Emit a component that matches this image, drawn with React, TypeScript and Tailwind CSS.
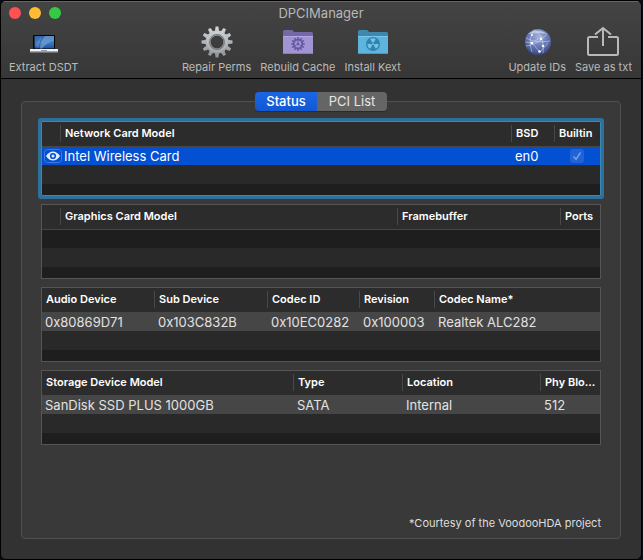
import { useState, type ReactNode } from "react";

function LaptopIcon() {
  return (
    <svg viewBox="0 0 32 32" className="size-8" aria-hidden="true">
      <defs>
        <linearGradient id="screen" x1="0" y1="0" x2="0" y2="1">
          <stop offset="0" stopColor="#3565a8" />
          <stop offset="0.55" stopColor="#3f78bd" />
          <stop offset="1" stopColor="#1f4f9f" />
        </linearGradient>
      </defs>
      <rect x="5" y="9" width="22" height="14.5" rx="1" fill="#050505" />
      <rect x="6.500" y="10" width="19.500" height="12.500" fill="url(#screen)" />
      <path d="M17 10h9v5c-5 1-9 4-12 7.500h-2c0-5 2-9 5-12.500z" fill="#7fb0dd" opacity="0.55" />
      <path d="M7 20c2-5 4-7 7-9-2 4-3 7-3 11z" fill="#6fa3d8" opacity="0.4" />
      <rect x="2" y="23" width="28" height="2" fill="#f1f1f1" />
      <rect x="2" y="25" width="28" height="1.500" fill="#a4a4a4" />
      <rect x="13" y="24" width="6" height="1" fill="#999999" />
    </svg>
  );
}

const TEETH = [0, 30, 60, 90, 120, 150, 180, 210, 240, 270, 300, 330];

function GearIcon() {
  return (
    <svg viewBox="0 0 32 32" className="size-8" aria-hidden="true">
      <defs>
        <linearGradient id="steel" gradientUnits="userSpaceOnUse" x1="0" y1="0" x2="0" y2="32">
          <stop offset="0" stopColor="#d3d8dc" />
          <stop offset="1" stopColor="#8d9093" />
        </linearGradient>
      </defs>
      <mask id="gearMask">
        {TEETH.map((a) => (
          <path key={a} d="M13.800 6 14.600 0.500h2.800l0.800 5.500z" fill="#fff" transform={`rotate(${a} 16 16)`} />
        ))}
        <circle cx="16" cy="16" r="11.500" fill="#fff" />
        <circle cx="16" cy="16" r="6.500" fill="#000" />
      </mask>
      <rect width="32" height="32" fill="url(#steel)" mask="url(#gearMask)" />
      <circle cx="16" cy="16" r="7.300" fill="none" stroke="#74797d" strokeWidth="1.200" />
      <circle cx="16" cy="16" r="9.500" fill="none" stroke="#e0e3e5" strokeWidth="0.800" opacity="0.4" />
    </svg>
  );
}

function CacheFolderIcon() {
  return (
    <svg viewBox="0 0 32 32" className="size-8" aria-hidden="true">
      <path d="M1 27V5.500q0-1.500 1.500-1.500h7q1.200 0 1.800 1l0.700 1h17.500q1.500 0 1.500 1.500V27z" fill="#7468a8" />
      <path d="M1 10h30v17q0 1-1 1H2q-1 0-1-1z" fill="#a294d4" />
      <path d="M1 10h30v1H1z" fill="#b3a7df" />
      <path d="M1 27h30q0 1-1 1H2q-1 0-1-1z" fill="#887bb9" />
      {TEETH.map((a) => (
        <path key={a} d="M15 13.500 15.400 11h1.200l0.400 2.500z" fill="#6657a3" transform={`rotate(${a} 16 18)`} />
      ))}
      <circle cx="16" cy="18" r="4.300" fill="none" stroke="#6657a3" strokeWidth="1.800" />
      <circle cx="16" cy="18" r="1.200" fill="#6657a3" />
      <path d="M16 18v-4M16 18l3.500 2M16 18l-3.500 2" stroke="#6657a3" strokeWidth="0.800" />
    </svg>
  );
}

function KextFolderIcon() {
  return (
    <svg viewBox="0 0 32 32" className="size-8" aria-hidden="true">
      <path d="M1 27V5.500q0-1.500 1.500-1.500h7q1.200 0 1.800 1l0.700 1h17.500q1.500 0 1.500 1.500V27z" fill="#3f88ac" />
      <path d="M1 10h30v17q0 1-1 1H2q-1 0-1-1z" fill="#5db5dd" />
      <path d="M1 10h30v1H1z" fill="#78c7ea" />
      <path d="M1 27h30q0 1-1 1H2q-1 0-1-1z" fill="#4998bd" />
      <circle cx="16" cy="18" r="7" fill="#2f83ae" />
      {[0, 120, 240].map((a) => (
        <path key={a} d="M15.200 16.600 13.200 13.100a5.600 5.600 0 0 1 5.600 0L16.800 16.600a1.600 1.600 0 0 0-1.600 0z" fill="#74c4e6" transform={`rotate(${a} 16 18)`} />
      ))}
      <circle cx="16" cy="18" r="1" fill="#74c4e6" />
    </svg>
  );
}

function GlobeIcon() {
  return (
    <svg viewBox="0 0 32 32" className="size-8" aria-hidden="true">
      <defs>
        <radialGradient id="globe" cx="0.5" cy="0.3" r="0.7">
          <stop offset="0" stopColor="#a3b1dc" />
          <stop offset="0.6" stopColor="#5f72b0" />
          <stop offset="1" stopColor="#39477f" />
        </radialGradient>
      </defs>
      <circle cx="17" cy="16" r="13" fill="url(#globe)" />
      <path d="M7 8c7-5 14-4 19 0-5-1-13-1-19 0z" fill="#dfe5f7" opacity="0.6" />
      <g fill="none" stroke="#d9e2fa" strokeWidth="0.700" opacity="0.75">
        <path d="M5 12c5 3 14 5 24 3M13 4c-4 6-5 13-2 22M13 4c7 4 10 11 9 23M5 20c8-1 15-5 21-12M11 17l8 9M11 17l11-7M19 26l8-9M4.500 16l6.500 1" />
      </g>
      <g fill="#ffffff">
        <circle cx="11" cy="17" r="1.300" />
        <circle cx="20" cy="13" r="1.200" />
        <circle cx="22" cy="20" r="1.200" />
        <circle cx="18.500" cy="25.500" r="1.300" />
        <circle cx="11" cy="9" r="1" />
      </g>
    </svg>
  );
}

function ShareIcon() {
  return (
    <svg viewBox="0 0 32 32" className="size-8" aria-hidden="true">
      <g fill="none" stroke="#b9b9b9" strokeWidth="2">
        <path d="M11 11H2.500Q1 11 1 12.500V27.500Q1 29 2.500 29H29.500Q31 29 31 27.500V12.500Q31 11 29.500 11H21" />
        <path d="M16 20V2M8 8.500 16 2l8 6.500" />
      </g>
    </svg>
  );
}

function ToolbarButton({ label, children }: { label: string; children: ReactNode }) {
  return (
    <button type="button" className="flex flex-col items-center text-[11px] leading-[18px] text-[#b9b9b9]">
      {children}
      {label}
    </button>
  );
}

function EyeIcon() {
  return (
    <svg viewBox="0 0 18 14" className="h-3.5 w-[18px]" role="img" aria-label="Visible">
      <rect x="0.500" y="0.500" width="17" height="13" rx="3" fill="none" stroke="#3f7ae2" />
      <path d="M2 7Q5 2.500 9 2.500T16 7Q13 11.500 9 11.500T2 7z" fill="#e3edff" />
      <circle cx="9" cy="7" r="3.100" fill="#0350d2" />
      <circle cx="9" cy="7" r="1.500" fill="#e3edff" />
    </svg>
  );
}

type Column = { title: string; width: string };

function DeviceTable({ name, columns, row, selected = false }: {
  name: string;
  columns: Column[];
  row?: ReactNode[];
  selected?: boolean;
}) {
  const rowColor = selected ? "bg-[#0350d2] text-white" : row ? "bg-[#464646] text-[#e2e2e2]" : "bg-[#1e1e1e]";
  const frame = selected ? "rounded-[1px] border-[#3d87b5] ring-3 ring-[#2f6f9c]" : "border-[#555555]";
  return (
    <div className={`border ${frame}`}>
      <table aria-label={name} className="w-full table-fixed border-collapse bg-[#1e1e1e] text-left">
        <thead className="bg-[#2c2c2c] text-[11px] text-white">
          <tr className="border-b border-[#464646]">
            {columns.map((c, i) => (
              <th key={i} scope="col" className={`h-6 p-0 font-semibold ${c.width}`}>
                <div className={`h-[17px] truncate pl-1 leading-[17px] ${i < columns.length - 1 ? "border-r border-[#484848]" : ""}`}>
                  {c.title}
                </div>
              </th>
            ))}
          </tr>
        </thead>
        <tbody className="text-[13px] leading-[18px]">
          <tr className={rowColor}>
            {columns.map((c, i) => (
              <td key={i} className={`h-[19px] p-0 ${c.title ? "truncate pl-[3px]" : "pl-0.5"}`}>
                {row?.[i]}
              </td>
            ))}
          </tr>
          <tr className="bg-[#292929]">
            <td colSpan={columns.length} className="h-[19px] p-0" />
          </tr>
          <tr>
            <td colSpan={columns.length} className="h-[11px] p-0" />
          </tr>
        </tbody>
      </table>
    </div>
  );
}

function BuiltinCheckbox() {
  return (
    <label className="ml-3 grid w-3.5 *:col-start-1 *:row-start-1">
      <input type="checkbox" aria-label="Builtin" checked disabled readOnly className="size-3.5 appearance-none rounded-[3px] bg-[#2163d4]" />
      <svg viewBox="0 0 14 14" className="size-3.5" aria-hidden="true">
        <path d="M3.500 7.500 6 10.300 10.500 3.500" fill="none" stroke="#78a2ea" strokeWidth="1.500" />
      </svg>
    </label>
  );
}

const TABS = [
  { name: "Status", width: "w-[62px]" },
  { name: "PCI List", width: "w-[70px]" },
];

export default function App() {
  const [tab, setTab] = useState("Status");
  return (
    <div className="flex min-h-screen flex-col bg-[#080c16] pr-px font-['Inter','Liberation_Sans',sans-serif]">
      <div className="flex flex-1 flex-col overflow-hidden rounded-md border border-black bg-[#323232]">
        <header className="border-b border-black bg-linear-to-b from-[#444444] to-[#373737] shadow-[inset_0_1px_0_#666666]">
          <div className="grid h-[23px] grid-cols-[1fr_auto_1fr] items-center px-2">
            <div className="flex gap-2">
              <button type="button" aria-label="Close" className="size-3 rounded-full bg-[#ff5052]" />
              <button type="button" aria-label="Minimize" className="size-3 rounded-full bg-[#fdbc34]" />
              <button type="button" aria-label="Zoom" className="size-3 rounded-full bg-[#35c944]" />
            </div>
            <h1 className="text-[13px] leading-4 text-[#b8b8b8]">DPCIManager</h1>
          </div>
          <div className="flex justify-between py-0.5 pr-[9px] pl-2">
            <ToolbarButton label="Extract DSDT"><LaptopIcon /></ToolbarButton>
            <div className="flex gap-[9px] pr-1">
              <ToolbarButton label="Repair Perms"><GearIcon /></ToolbarButton>
              <ToolbarButton label="Rebuild Cache"><CacheFolderIcon /></ToolbarButton>
              <ToolbarButton label="Install Kext"><KextFolderIcon /></ToolbarButton>
            </div>
            <div className="flex gap-[9px]">
              <ToolbarButton label="Update IDs"><GlobeIcon /></ToolbarButton>
              <ToolbarButton label="Save as txt"><ShareIcon /></ToolbarButton>
            </div>
          </div>
        </header>

        <main className="flex flex-1 flex-col px-5 pt-[22px] pb-5">
          <section className="flex flex-1 flex-col rounded-[4px] border border-[#505050] bg-[#393939] px-[19px] pb-2">
            <div role="tablist" className="-mt-[10px] flex self-center overflow-hidden rounded-[4px] shadow-[0_1px_0_#2a2a2a]">
              {TABS.map((t) => (
                <button
                  key={t.name}
                  type="button"
                  role="tab"
                  aria-selected={tab === t.name}
                  onClick={() => setTab(t.name)}
                  className={`h-[19px] text-[13px] leading-[19px] ${t.width} ${
                    tab === t.name
                      ? "bg-linear-to-b from-[#1c66e4] to-[#1257d3] font-medium text-white"
                      : "bg-[#656565] text-[#e6e6e6]"
                  }`}
                >
                  {t.name}
                </button>
              ))}
            </div>

            <div className="mt-[10px] flex flex-col gap-2">
              <DeviceTable
                name="Network cards"
                selected
                columns={[
                  { title: "", width: "w-[19px]" },
                  { title: "Network Card Model", width: "" },
                  { title: "BSD", width: "w-[43px]" },
                  { title: "Builtin", width: "w-[45px]" },
                ]}
                row={[<EyeIcon />, "Intel Wireless Card", "en0", <BuiltinCheckbox />]}
              />
              <DeviceTable
                name="Graphics cards"
                columns={[
                  { title: "", width: "w-[19px]" },
                  { title: "Graphics Card Model", width: "" },
                  { title: "Framebuffer", width: "w-[163px]" },
                  { title: "Ports", width: "w-[39px]" },
                ]}
              />
              <DeviceTable
                name="Audio devices"
                columns={[
                  { title: "Audio Device", width: "w-[113px]" },
                  { title: "Sub Device", width: "w-[113px]" },
                  { title: "Codec ID", width: "w-[92px]" },
                  { title: "Revision", width: "w-[75px]" },
                  { title: "Codec Name*", width: "" },
                ]}
                row={["0x80869D71", "0x103C832B", "0x10EC0282", "0x100003", "Realtek ALC282"]}
              />
              <DeviceTable
                name="Storage devices"
                columns={[
                  { title: "Storage Device Model", width: "" },
                  { title: "Type", width: "w-[109px]" },
                  { title: "Location", width: "w-[138px]" },
                  { title: "Phy Blo...", width: "w-[59px]" },
                ]}
                row={["SanDisk SSD PLUS 1000GB", "SATA", "Internal", "512"]}
              />
            </div>

            <p className="mt-auto self-end text-[11px] leading-[14px] text-[#dedede]">*Courtesy of the VoodooHDA project</p>
          </section>
        </main>
      </div>
    </div>
  );
}
